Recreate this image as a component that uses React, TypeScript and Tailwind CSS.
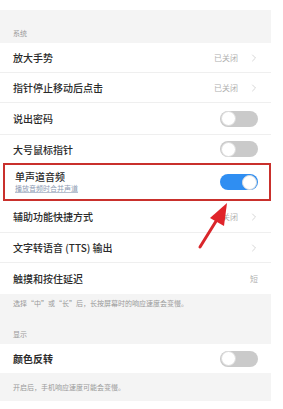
import { ChevronRight } from "lucide-react";

const font = { fontFamily: '"Noto Sans CJK SC", "Noto Sans", sans-serif' };

const Toggle = ({ on = false }: { on?: boolean }) => (
  <div
    className={`w-[38px] h-[16px] rounded-full flex items-center px-[1px] ${
      on ? "bg-[#2f8ef2] justify-end" : "bg-[#cacaca] justify-start"
    }`}
  >
    <div className="w-[15px] h-[15px] rounded-full bg-white border border-[#dcdcdc]" />
  </div>
);

const Row = ({
  title,
  h,
  value,
  chevron,
  toggle,
  bold,
  divider = true,
}: {
  title: string;
  h: string;
  value?: string;
  chevron?: boolean;
  toggle?: "on" | "off";
  bold?: boolean;
  divider?: boolean;
}) => (
  <div className={`bg-white ${h} flex items-center pl-[13px] pr-[13px] ${divider ? "border-b border-[#efefef]" : ""}`}>
    <span className={`text-[10px] text-[#2a2a2a] ${bold ? "font-bold" : "font-medium"}`}>{title}</span>
    <div className={`ml-auto flex items-center gap-[10px] ${chevron ? "-mr-[2px]" : ""}`}>
      {value && <span className="text-[8px] text-[#b0b0b0]">{value}</span>}
      {chevron && <ChevronRight size={12} strokeWidth={1.5} className="text-[#c8c8c8]" />}
      {toggle && <Toggle on={toggle === "on"} />}
    </div>
  </div>
);

export default function App() {
  return (
    <div className="w-[283px] h-[409px] bg-white overflow-hidden relative" style={font}>
      <div className="w-[271px]">
        <div className="h-[10px] bg-white" />
        <div className="h-[33px] bg-[#f4f4f4] flex items-end pl-[13px] pb-[5px]">
          <span className="text-[7px] text-[#9a9a9a]">系统</span>
        </div>
        <Row title="放大手势" h="h-[30px]" value="已关闭" chevron />
        <Row title="指针停止移动后点击" h="h-[30px]" value="已关闭" chevron />
        <Row title="说出密码" h="h-[32px]" toggle="off" />
        <Row title="大号鼠标指针" h="h-[28px]" toggle="off" divider={false} />
        <div className="h-[38px] bg-white border-2 border-[#c9302c] ml-[3px] flex items-center pl-[10px] pr-[11px]">
          <div className="flex flex-col">
            <span className="text-[10px] leading-[12px] font-medium text-[#2a2a2a]">单声道音频</span>
            <span className="text-[7px] leading-[9px] text-[#8d9bb3] mt-[1px] underline decoration-[#b7c0d0]">播放音频时合并声道</span>
          </div>
          <div className="ml-auto">
            <Toggle on />
          </div>
        </div>
        <Row title="辅助功能快捷方式" h="h-[32px]" value="关闭" chevron />
        <Row title="文字转语音 (TTS) 输出" h="h-[30px]" chevron />
        <Row title="触摸和按住延迟" h="h-[31px]" value="短" divider={false} />
        <div className="h-[50px] bg-[#f4f4f4] pl-[13px] pt-[4px] flex flex-col">
          <span className="text-[7px] text-[#9a9a9a]">选择“中”或“长”后，长按屏幕时的响应速度会变慢。</span>
          <span className="text-[7px] text-[#9a9a9a] mt-auto mb-[5px]">显示</span>
        </div>
        <Row title="颜色反转" h="h-[29px]" toggle="off" bold divider={false} />
        <div className="h-[28px] bg-[#f4f4f4] pl-[13px] flex items-center">
          <span className="text-[7px] text-[#9a9a9a]">开启后，手机响应速度可能会变慢。</span>
        </div>
      </div>
      <svg className="absolute left-0 top-0" width="283" height="409" viewBox="0 0 283 409">
        <line x1="200" y1="247" x2="218" y2="218" stroke="#d9262b" strokeWidth="3" strokeLinecap="round" />
        <polygon points="227,203 210,218 224,226" fill="#e0242a" />
      </svg>
    </div>
  );
}
